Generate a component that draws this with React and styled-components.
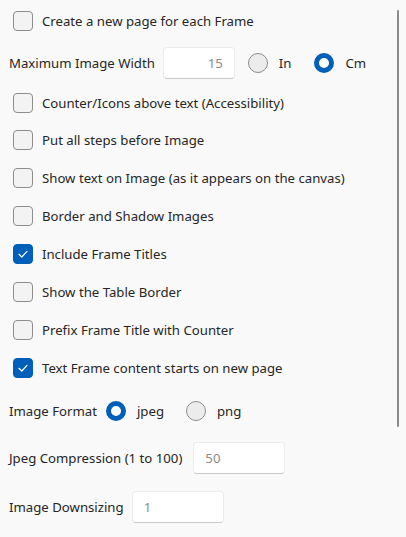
import React from "react";
import styled, { createGlobalStyle } from "styled-components";

const Global = createGlobalStyle`
  html, body { margin: 0; padding: 0; background: #f9f9f9; }
  body { font-family: "Segoe UI", "Noto Sans", sans-serif; }
`;

const Page = styled.div`
  position: relative;
  width: 406px;
  height: 537px;
  overflow: hidden;
  background: #f9f9f9;
  color: #262626;
  font-size: 13.2px;
  display: flex;
  flex-direction: column;
`;

const Row = styled.div`
  height: ${(p) => p.$h || 38}px;
  display: flex;
  align-items: center;
  padding-left: ${(p) => (p.$label ? 9 : 13)}px;
  gap: ${(p) => p.$gap || 0}px;
  box-sizing: border-box;
`;

const Group = styled.div`
  display: flex;
  align-items: center;
  gap: ${(p) => p.$gap}px;
  margin-left: ${(p) => p.$ml || 0}px;
`;

const Box = styled.span`
  width: 20px;
  height: 20px;
  box-sizing: border-box;
  border-radius: 4px;
  flex: none;
  display: flex;
  align-items: center;
  justify-content: center;
  background: ${(p) => (p.$on ? "#005fb8" : "#f3f3f3")};
  border: 1px solid ${(p) => (p.$on ? "#005fb8" : "#8d8d8d")};
`;

const CheckText = styled.span`
  margin-left: 9px;
  white-space: nowrap;
`;

const Label = styled.span`
  white-space: nowrap;
`;

const Input = styled.div`
  width: ${(p) => p.$w}px;
  height: 32px;
  box-sizing: border-box;
  background: #ffffff;
  border: 1px solid #ececec;
  border-bottom-color: #c8c8c8;
  border-radius: 4px;
  display: flex;
  align-items: center;
  justify-content: ${(p) => (p.$right ? "flex-end" : "flex-start")};
  padding: 0 11px;
  color: #8b8b8b;
  font-size: 13.2px;
  flex: none;
`;

const RadioGroup = styled.label`
  display: flex;
  align-items: center;
  gap: 11px;
`;

const Circle = styled.span`
  width: 20px;
  height: 20px;
  box-sizing: border-box;
  border-radius: 50%;
  flex: none;
  background: ${(p) => (p.$on ? "#ffffff" : "#ececec")};
  border: ${(p) => (p.$on ? "5.5px solid #005fb8" : "1px solid #8d8d8d")};
`;

const Scroll = styled.div`
  position: absolute;
  left: 397px;
  top: 10px;
  width: 2px;
  height: 417px;
  border-radius: 1px;
  background: #8a8a8a;
`;

const Check = ({ on, h, children }) => (
  <Row $h={h}>
    <Box $on={on}>
      {on && (
        <svg width="12" height="12" viewBox="0 0 12 12">
          <path d="M2 6.3 L4.8 9 L10 3.4" fill="none" stroke="#fff" strokeWidth="1.2" strokeLinecap="round" strokeLinejoin="round" />
        </svg>
      )}
    </Box>
    <CheckText>{children}</CheckText>
  </Row>
);

const Radio = ({ on, children }) => (
  <RadioGroup>
    <Circle $on={on} />
    <span>{children}</span>
  </RadioGroup>
);

export default function App() {
  return (
    <Page>
      <Global />
      <Check h={42}>Create a new page for each Frame</Check>
      <Row $h={42} $label $gap={8}>
        <Label>Maximum Image Width</Label>
        <Input $w={72} $right>15</Input>
        <Group $gap={23} $ml={5}>
          <Radio>In</Radio>
          <Radio on>Cm</Radio>
        </Group>
      </Row>
      <Check h={37}>Counter/Icons above text (Accessibility)</Check>
      <Check>Put all steps before Image</Check>
      <Check>Show text on Image (as it appears on the canvas)</Check>
      <Check>Border and Shadow Images</Check>
      <Check on>Include Frame Titles</Check>
      <Check>Show the Table Border</Check>
      <Check>Prefix Frame Title with Counter</Check>
      <Check on>Text Frame content starts on new page</Check>
      <Row $h={48} $label $gap={9}>
        <Label>Image Format</Label>
        <Group $gap={22}>
          <Radio on>jpeg</Radio>
          <Radio>png</Radio>
        </Group>
      </Row>
      <Row $h={46} $label $gap={11}>
        <Label>Jpeg Compression (1 to 100)</Label>
        <Input $w={92}>50</Input>
      </Row>
      <Row $h={52} $label $gap={8}>
        <Label>Image Downsizing</Label>
        <Input $w={92}>1</Input>
      </Row>
      <Scroll />
    </Page>
  );
}
